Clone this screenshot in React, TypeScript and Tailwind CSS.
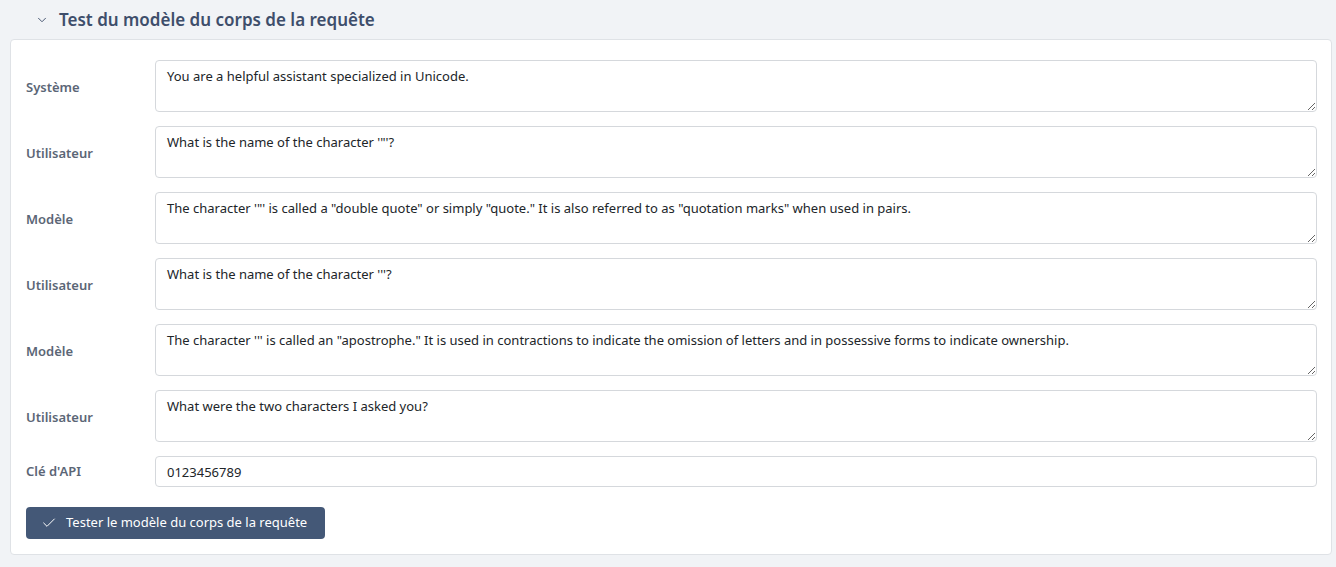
import { ChevronDown, Check } from "lucide-react";

const rows = [
  { label: "Système", value: "You are a helpful assistant specialized in Unicode." },
  { label: "Utilisateur", value: "What is the name of the character '\"'?" },
  {
    label: "Modèle",
    value:
      "The character '\"' is called a \"double quote\" or simply \"quote.\" It is also referred to as \"quotation marks\" when used in pairs.",
  },
  { label: "Utilisateur", value: "What is the name of the character '''?" },
  {
    label: "Modèle",
    value:
      "The character ''' is called an \"apostrophe.\" It is used in contractions to indicate the omission of letters and in possessive forms to indicate ownership.",
  },
  { label: "Utilisateur", value: "What were the two characters I asked you?" },
];

export default function App() {
  return (
    <div
      className="min-h-[567px] bg-[#f1f3f6] px-[10px] pt-[8px] text-[13px] text-[#212529]"
      style={{ fontFamily: '"Noto Sans", "Open Sans", sans-serif' }}
    >
      <div className="flex items-center gap-[10px] pl-[25px] h-[24px]">
        <ChevronDown size={14} strokeWidth={1.6} className="text-[#3e4e6b]" />
        <h2 className="text-[17px] font-semibold text-[#3e4e6b]">
          Test du modèle du corps de la requête
        </h2>
      </div>
      <div className="mt-[7px] w-[1322px] rounded-[4px] border border-[#dfe2e6] bg-white pl-[15px] pr-[14px] pt-[20px] pb-[15px]">
        <div className="flex flex-col gap-[14px]">
          {rows.map((r, i) => (
            <div key={i} className="flex items-center">
              <label className="w-[129px] shrink-0 pt-[3px] font-semibold text-[#5b6676]">
                {r.label}
              </label>
              <textarea
                defaultValue={r.value}
                className="h-[52px] flex-1 resize-y rounded-[4px] border border-[#d5d8dc] px-[11px] py-[5px] leading-[20px] text-[#212529] outline-none"
              />
            </div>
          ))}
          <div className="flex items-center">
            <label className="w-[129px] shrink-0 pt-[1px] font-semibold text-[#5b6676]">
              Clé d'API
            </label>
            <input
              defaultValue="0123456789"
              className="h-[31px] flex-1 rounded-[4px] border border-[#d5d8dc] px-[11px] text-[#212529] outline-none"
            />
          </div>
        </div>
        <button className="mt-[20px] flex h-[32px] items-center gap-[9px] rounded-[4px] bg-[#445877] pl-[15px] pr-[18px] text-[13px] text-white">
          <Check size={16} strokeWidth={1.5} />
          Tester le modèle du corps de la requête
        </button>
      </div>
    </div>
  );
}
